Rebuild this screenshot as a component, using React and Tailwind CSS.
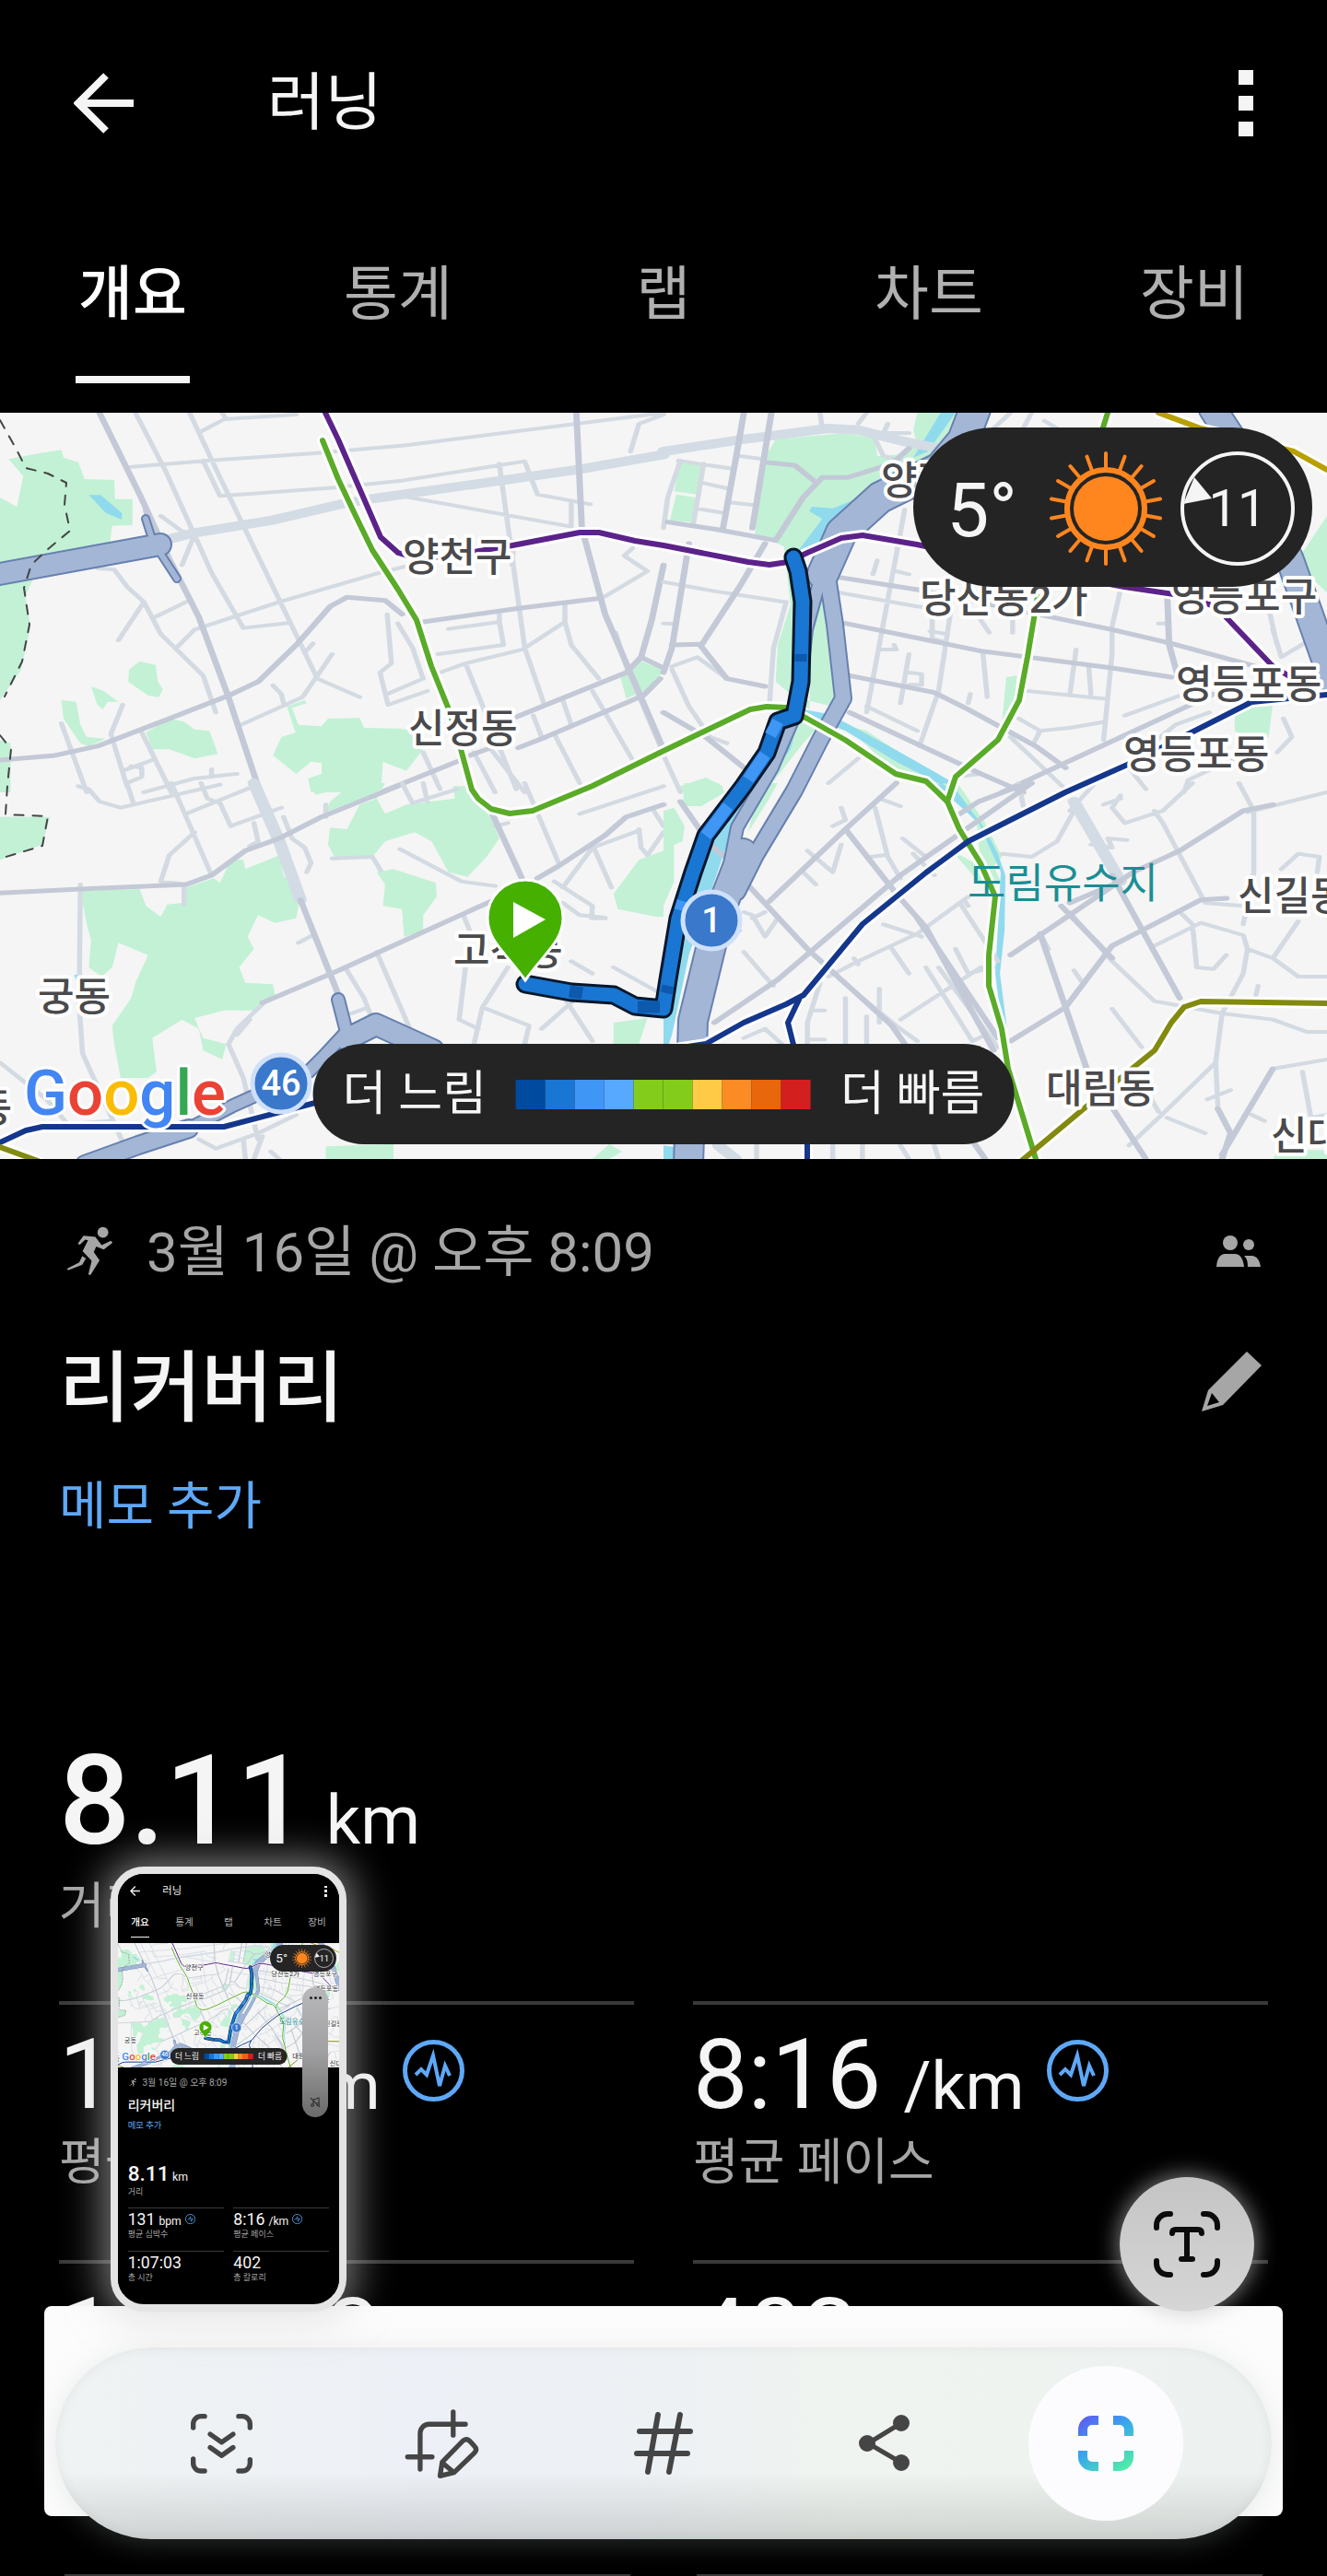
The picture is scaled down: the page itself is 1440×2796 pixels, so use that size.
import clsx from 'clsx'

const tabs = ['개요', '통계', '랩', '차트', '장비']

const paceColors = [
  'bg-[#004a9f]', 'bg-[#1976d2]', 'bg-[#3f96f5]', 'bg-[#57a8ff]', 'bg-[#84cc1c]',
  'bg-[#84cc1c]', 'bg-[#ffcb47]', 'bg-[#fb8b24]', 'bg-[#e8660c]', 'bg-[#d3201f]',
]

const stats = [
  { value: '131', unit: 'bpm', label: '평균 심박수', chart: true },
  { value: '8:16', unit: '/km', label: '평균 페이스', chart: true },
  { value: '1:07:03', label: '총 시간' },
  { value: '402', label: '총 칼로리' },
]

// Each tile covers a quarter of the map and has its own drawing grid
const tiles = [
  {
    place: 'matrix(.4592 0 0 .3333 0 -8)',
    parks: [
      'M20 175L95 155L145 145L150 170L185 185L200 240L270 243L272 305L313 305V390L265 392L260 445L100 500L60 620L72 720L50 860L0 960V300L40 330L55 230Z',
      'M305 860L330 833L368 845L373 900L385 925L375 950L350 945L303 900Z',
      'M215 915L245 930L280 965L255 965L243 990L230 975Z',
      'M145 960L180 965L190 1040L205 1080L250 1085L210 1110L190 1100L150 1020Z',
      'M345 1065L400 1020L435 1030L460 1055L495 1060L515 1135L460 1150L400 1120H360Z',
      'M678 980L720 960L725 970L690 985L705 1040L760 1045L775 1020L850 1018L860 1050L940 1052L990 1060L1000 1120L960 1190L905 1160L900 1260H735L728 1215L760 1200V1165L735 1160L700 1200L645 1140L665 1080L698 1065Z',
      'M1465 880L1510 830L1568 860L1545 915L1480 955Z',
      'M0 1090L25 1100V1260H0Z',
    ],
    water: ['M210 292H238L288 350V372L250 350Z'],
    bands: ['M385 440L460 415L640 375L810 320L900 300L1370 208L1568 160'],
    major: [
      'M235 24L330 290L400 500L470 690L540 950L600 1200L615 1260', 'M0 1155L130 1140L230 1110L400 1020L540 945L610 900L700 780L780 655L820 625L910 635L950 680',
      'M1362 24L1375 400L1430 680L1568 1120', 'M1000 705L1230 660L1420 628', 'M1568 520L1540 700L1515 820L1480 870L1300 970L1210 1020',
      'M1110 1140L1160 1115M1225 1115L1290 1080L1520 945L1560 890', 'M1515 820L1568 855', 'M345 340L360 430L420 570', 'M900 1260L1080 1160',
    ],
    minor: [
      'M320 24L390 210L500 545L575 725L685 708', 'M448 24L520 235L680 690L750 890L850 950', 'M310 200L490 180L750 155L960 130L1568 24',
      'M475 85L530 45L700 30M525 24L535 45', 'M480 180L520 295L790 268L950 245L1240 182L1270 290L1395 322', 'M1180 190L1240 790L1285 970', 'M960 298L1350 395V320',
      'M420 785L460 730L560 685L660 640L890 548L970 520', 'M230 530L270 535L300 590L340 640L380 745L480 880L510 1000', 'M340 640L280 765M365 690L440 640', 'M745 890L715 950L570 1040M745 890L785 810M670 970L665 940L645 912M720 805L740 775',
      'M915 680L925 840L898 870L917 975L1010 930M940 710L975 790L1000 890L915 940', 'M1040 870L1100 840L1235 795L1335 705V650M1060 728L1180 705L1190 780L1035 810M1180 680V705', 'M1335 705L1350 780L1415 890M1420 630L1530 540L1475 490L1495 465',
      'M1100 840L1220 1250M1210 520L1215 440M1310 1070L1370 1230M1400 930L1495 1155M1455 740L1480 850L1560 1110', 'M1260 1010L1280 1080M1330 960L1350 1040', 'M290 975L262 1070L300 1240M335 1065L405 1260M145 1035L205 1260', 'M290 1190L360 1155M300 1230L335 1210V1180L310 1175M340 1260L460 1215L560 1200M500 1185V1210', 'M1000 1130L1040 1250M1120 1130L1170 1260M1160 1120L1240 1260M1568 30L1510 60L1490 150', 'M380 360L430 410L460 420L430 520M390 470L400 430',
    ],
  },
  {
    place: 'matrix(.4592 0 0 .3333 720 -8)',
    parks: [
      'M265 110L430 90L500 108L505 165L560 160L600 130L590 80L600 24H690L640 200L500 270L420 340L350 430L335 480L340 960L410 985L400 600L380 570L350 620L345 990L265 900L270 780L300 650L285 460L245 435L215 430L235 180Z',
      'M40 185L90 190L80 290L25 280Z', 'M30 290L75 300L68 380L15 375Z', 'M340 1010L390 1010L330 1100L240 1260L270 1100Z',
      'M430 1040L480 1060L690 1250L620 1240L520 1160Z', 'M810 885L835 880L830 960L800 1030Z', 'M1350 1000L1380 975L1440 970L1430 1080L1395 1100L1350 1060Z',
      'M1568 360L1500 500L1530 560L1568 610Z', 'M40 1240L100 1212L140 1240V1260H40Z',
    ],
    water: [
      'M655 24H690L625 150L590 170Z', 'M350 330L400 335L520 270L420 370L350 480L320 470L375 370L345 345Z',
      'M330 990L390 1005L440 1040L560 1130L680 1225L670 1245L550 1160L430 1060L330 1005Z', 'M270 1100L320 1020L300 1120L225 1260H190Z',
    ],
    bands: ['M0 150L180 112L390 75L460 80L560 115L650 140'],
    major: [
      'M190 24L170 180L140 405M255 24L210 400', 'M10 380L130 405L265 440L330 300L375 235L435 235L540 190L580 140', 'M60 450L20 790L0 870M20 780L85 778L150 890L240 915', 'M240 450L180 590L90 780', 'M240 185L310 195L360 250',
      'M415 560L600 600L1060 730L1200 775L1400 850', 'M430 710L750 800L1060 855L1200 885', 'M440 880L640 935L720 990L880 1110L950 1180', 'M800 1260L1300 940', 'M440 1000L750 1200L850 1260', 'M1190 600L1195 780L1215 880', 'M0 1000L100 1080L190 1180',
    ],
    minor: [
      'M35 180L155 205M180 165L235 175M95 190L70 390M85 250L150 270M75 335L140 350M150 315L215 325M40 180L10 300L0 400', 'M370 24L375 75M460 60L480 24M530 60L520 90L580 90M500 110L520 165L560 180', 'M0 575L120 605L285 640M250 980L260 790L290 640', 'M20 850L80 820L150 890M20 860L60 980L110 1080M0 710L30 712',
      'M570 340L540 560L480 1000M415 610L600 655L680 670M680 660L650 930L605 1110M505 505L495 550M550 540L580 550', 'M635 690V760L665 770M630 735L670 745M545 780L550 795L515 795M580 810L560 970M755 810L765 950', 'M580 870L610 875V910H580M725 940L720 970M860 930L1040 955M975 795L960 945M1005 850L1010 940',
      'M840 1020L890 1060L960 1050L1045 1030M820 1080L950 1250M750 1200L690 1210M890 1060L875 1100', 'M1060 730V810L1040 1090M1080 600L1060 720M1170 710H1190M825 700V740M750 700L770 740', 'M1090 1010L1300 905M1130 1130L1210 1040L1290 1000M1465 1020L1485 1080L1450 1130M1100 1180L1140 1250M1230 1260L1240 1220L1380 1130', 'M1440 730L1460 820L1520 770M1430 660L1450 780M390 1230L460 1150M480 980L600 1060M820 24L780 75M870 24L850 75M900 50L930 75', 'M0 1140L40 1260M110 1080L150 1100',
    ],
  },
  {
    place: 'matrix(.4592 0 0 .3333 0 402)',
    parks: [
      'M0 110H118L100 200L0 250Z', 'M730 0H770L850 0H910L890 50L835 60L770 95L780 60L820 15L745 38Z',
      'M780 145L820 150L850 70L890 50L910 100L960 70L1075 50L1070 10H1110L1125 60L1160 110L1180 180L1150 240L1105 305L1060 290L1020 190L980 160L910 190L880 240L790 240L775 200Z',
      'M890 290L930 280L1030 325L1032 370L1000 430V480L955 500L950 410L905 400L910 330Z',
      'M190 350L330 345L345 400L380 435L395 395L430 390L440 340L505 310L520 325L545 250L575 250L580 280L660 235L670 300L710 370L700 440L650 455L610 430L585 500L600 540L565 600L580 650L645 655L650 690L600 740L530 740L460 765L480 830L535 850L525 900L480 870L470 800L430 770L360 830L370 940L350 960L285 960L270 850L265 790L290 740L310 700L320 650L350 560L280 520L265 600L240 630L210 600L215 510L205 460Z',
      'M1568 220L1510 250L1450 360L1460 410L1550 435H1568Z', 'M1450 780L1530 765L1510 850H1450Z', 'M770 1183L930 1175V1224H770Z', 'M1400 1224L1440 1175L1470 1200L1440 1224Z',
    ],
    water: ['M175 625L195 620L185 655Z'],
    bands: ['M600 0L660 190L710 380'],
    major: [
      'M0 358L190 345L440 330L500 300L580 220L660 180L760 110L940 10', 'M710 380L800 690', 'M1160 90L1240 330', 'M1270 310L1320 270L1430 170L1480 110L1568 70', 'M620 715L800 610L1160 385',
    ],
    minor: [
      'M190 330L187 720L195 880L300 1200M435 340V395', 'M185 10L210 20L235 60L285 80L520 5M300 0L315 65M405 0L500 300M475 0L490 50L520 65L545 140L665 80M440 100L600 10', 'M460 160L400 235L380 320L440 330M600 130L610 190L590 205', 'M670 110L690 180L720 210L735 260L725 290',
      'M785 245L880 240L900 285M945 215L1090 320L1170 335M890 550L975 820M820 610L860 700L880 770M1095 430L1110 480', 'M620 720L560 800L540 850L575 960L610 1160M560 820L590 770', 'M1200 600L1140 730L1120 850M1100 600L1085 770L1130 800M1150 735L1250 790L1240 850', 'M1240 0L1320 260M1330 340L1400 210L1510 155M1400 200L1445 340M1310 320L1400 400L1398 440L1430 440M1330 390L1370 430L1430 438', 'M1510 150L1515 210L1530 235L1568 160M1545 90L1568 140M950 0L975 65L1080 20M1000 0L1010 60M770 70V110', 'M1450 600L1568 690M1350 580L1400 620M1320 670L1400 840M1370 690L1280 800M705 520L740 495M0 910L110 1030L160 1110L260 1100', 'M470 1160L510 1190L610 1140L700 1080M575 1160L580 1224M620 1150L600 1224M660 1224L640 1200M1370 100L1568 10M1170 140L1200 130M830 750L860 735',
    ],
  },
  {
    place: 'matrix(.4592 0 0 .3333 720 402)',
    parks: [
      'M0 90L25 80L50 140L45 190L25 200V320L0 400Z', 'M50 0H130L145 30L90 75H45Z', 'M270 0L250 50L200 160L230 0Z', 'M660 0L700 10L760 130L800 240L780 270L800 330L750 330L700 250L680 220L750 270L740 130Z', 'M1450 1200L1520 1195H1568V1224H1440Z',
    ],
    water: [
      'M215 0L150 200L60 560L20 820L0 900V720L45 540L90 300L120 190L180 60Z', 'M640 0L690 20L760 150L790 230L808 300L806 480L795 620L812 800L800 790L784 620L792 430L797 290L745 130Z', 'M0 1180L25 1185L40 1224H0Z',
    ],
    bands: ['M970 60L1080 320M130 1180L170 1224'],
    major: [
      'M550 0L430 150L250 385', 'M120 780L270 640L560 300L870 0', 'M1440 70L1370 90L1220 220L1110 290L820 560', 'M1330 375L1270 380L1060 530L950 730L820 840', 'M1060 300L1220 700M430 150L550 360L620 470L780 870M600 440L790 830',
      'M185 310L340 540L540 790L760 1224M890 490L1000 930L1100 1140L1140 1224', 'M40 60L110 200L145 240M940 400L1060 570M960 390L1080 320', 'M1310 1060L1340 1140L1320 1224M1320 1210L1440 930', 'M700 100L745 60L860 0',
    ],
    minor: [
      'M500 80L530 240L560 310M420 80L430 120L400 140M340 220L400 290L420 200M490 240L520 235M565 180L620 240M510 50L560 75M590 230L640 300M330 290L360 330', 'M390 630L460 580L600 490L700 390L720 370M460 590L450 570M700 390L790 580M520 460L610 500M720 400L710 380', 'M620 600L730 840L760 820M650 600L790 860M690 540L720 620L780 600M560 770L750 600M540 540L580 620M510 670V780M470 700L550 790L600 840', 'M190 420L210 430L240 500L270 440M190 550L240 630L260 660M210 440L240 420M180 480L160 500', 'M370 650L340 780V850M430 700V850M480 760V850M350 740L380 740M340 835H380M190 830L240 800L280 850', 'M970 90L930 190L870 240L800 230M1020 0L960 90M1080 40L1060 80L1090 130L1180 90L1250 0M840 0L850 75M1040 70L1080 50M1160 90L1180 130L1280 390L1370 400M1360 0L1395 90V290L1370 460', 'M1010 200L1060 210L1050 180L1095 185M960 420L1060 580L1160 710L1320 750L1440 770L1520 810H1568', 'M1160 530L1270 455L1370 495L1380 540L1440 570L1500 630H1568M1440 570L1500 450M1220 420L1250 460L1260 600L1300 605L1330 560', 'M1380 540L1370 620L1320 750L1305 910L1310 1050M1305 910L1170 1090L1100 1180M1190 1090L1280 1140M1440 930L1568 900M1510 940L1530 1090L1568 1080', 'M1460 280L1500 230L1550 240L1545 290M890 490L910 540M970 610L990 650M1060 735L1130 860M1170 1070L1140 1000M1285 1030L1340 1000M1390 1080L1420 1100M1400 690L1405 660', 'M1380 95L1480 60L1568 30M650 1224L640 1180M400 1180V1224M470 1180V1224M220 1180V1224M560 1180L580 1224',
    ],
  },
]

const railLines = [
  { color: '#5b238a', d: 'M353 0L367 29L390 82L413 135L432 152L455 159L496 154L556 144L629 130H650L689 139L720 144L812 162L835 165L855 162L876 152L913 136L936 133L995 143L1110 168L1220 189L1294 200L1321 212L1381 275L1409 292' },
  { color: '#5aab28', d: 'M350 30L367 72L386 112L404 149L432 192L452 225L468 275L487 322L500 365L512 409L519 419L533 430L553 435L578 432L643 405L720 367L814 322L832 319L853 320L876 332L917 355L972 392L1005 400L1028 422L1041 452L1064 489L1080 525L1073 589V622L1087 669L1094 712L1124 810' },
  { color: '#5aab28', d: 'M1202 0L1197 16M1126 199L1115 265L1106 312L1083 355L1037 395L1028 422' },
  { color: '#14378c', d: 'M1440 306L1358 314L1289 349L1230 379L1156 412L1051 465L1005 499L936 555L872 632L853 642L807 662L766 685L342 749L243 775H46L28 779L0 792' },
  { color: '#14378c', d: 'M867 637L855 662L862 690L876 795V812' },
  { color: '#828a10', d: 'M1440 641L1303 639L1285 645L1271 662L1253 692L1216 722L1106 814M0 797L41 812' },
  { color: '#b8a000', d: 'M1257 0L1303 17L1404 42L1440 62' },
]

const expressways = [
  { w: 24, d: 'M-6 176L174 143' },
  { w: 8, d: 'M158 115L166 140L192 180' },
  { w: 34, d: 'M1058 -4L1045 30L1020 60L955 92L913 130L893 175' },
  { w: 14, d: 'M893 170L875 235L866 320L838 385L800 450L790 500' },
  { w: 18, d: 'M896 165L906 230L915 310L890 355L862 410L820 480L800 520' },
  { w: 32, d: 'M806 478L780 545L752 660L747 816' },
  { w: 14, d: 'M367 637L376 672L350 700L335 715L253 752L205 777' },
  { w: 20, d: 'M205 777L150 795L92 816' },
  { w: 24, d: 'M376 680L408 664L470 692' },
  { w: 30, d: 'M1316 -4L1345 40L1400 160L1446 290' },
]

const places = [
  [437, 172, '양천구'], [443, 358, '신정동'], [956, 89, '양평동'], [998, 217, '당산동2가'],
  [1271, 215, '영등포구'], [1276, 310, '영등포동'], [1219, 386, '영등포동'], [1343, 540, '신길동'],
  [1135, 749, '대림동'], [1379, 800, '신대방동'], [492, 599, '고척동'], [41, 649, '궁동'], [-66, 770, '항동'],
]

const route = 'M570 620L620 629L666 632L689 644L720 647L725 615L736 549L752 499L766 459L807 405L832 369L844 335L862 329L869 292L871 205L866 172L861 157'

function Shield({ x, y, children }) {
  return (
    <g>
      <circle cx={x} cy={y} r="31" fill="#3a78cb" stroke="#cfe0fb" strokeWidth="5" />
      <text x={x} y={y + 13} fontSize="38" fontWeight="500" fill="#fff" textAnchor="middle">{children}</text>
    </g>
  )
}

function RouteMap() {
  return (
    <svg viewBox="0 0 1440 810" className="block w-full h-auto bg-[#f5f5f5] font-['Roboto','Noto_Sans_CJK_KR',sans-serif]" role="img" aria-label="코스 지도">
      {tiles.map(tile => (
        <g key={tile.place} transform={tile.place} fill="none" strokeLinejoin="round" strokeLinecap="round">
          <path d={tile.parks.join('')} fill="#c3f1d5" />
          <path d={tile.water.join('')} fill="#90daee" />
          <path d={tile.minor.join('')} stroke="#d3dae2" strokeWidth="12" />
          <path d={tile.bands.join('')} stroke="#d3dce4" strokeWidth="30" />
          <path d={tile.major.join('')} stroke="#c3c9d6" strokeWidth="15" />
        </g>
      ))}

      <g fill="none" strokeLinejoin="round" strokeLinecap="round">
        {expressways.map(e => <path key={e.d} d={e.d} stroke="#6680b0" strokeWidth={e.w + 2} />)}
        {expressways.map(e => <path key={e.d} d={e.d} stroke="#a3b6d5" strokeWidth={e.w - 2} />)}
        <path d="M0 8L18 40L28 60L52 66L72 76L70 100L76 128L52 148L34 165L26 190L32 230L24 270L5 308M0 350L12 365L8 405L6 436L52 438L46 470L0 484" stroke="#444" strokeWidth="2" strokeDasharray="10 10" />
        {railLines.map(l => <path key={l.d} d={l.d} stroke="#fff" strokeWidth="12" />)}
        {railLines.map(l => <path key={l.d} d={l.d} stroke={l.color} strokeWidth="6" />)}
        <path d={route} stroke="#06172b" strokeWidth="21" />
        <path d={route} stroke="#1976d2" strokeWidth="15" />
        <path d="M766 459L790 427M812 398L830 371M836 350L844 335M738 540L741 530" stroke="#3f96f5" strokeWidth="13" strokeLinecap="butt" />
        <path d="M692 645H716M618 628L632 630M869 262V270M723 630L725 622" stroke="#0d59ad" strokeWidth="13" strokeLinecap="butt" />
      </g>

      <g fontSize="43" fontWeight="500" fill="#4a4a4c" stroke="#fff" strokeWidth="8" strokeLinejoin="round" paintOrder="stroke">
        {places.map(([x, y, name]) => <text key={`${name}${y}`} x={x} y={y}>{name}</text>)}
      </g>
      <text x="1050" y="527" fontSize="45" fill="#1a8e95">도림유수지</text>

      <Shield x={772} y={551}>1</Shield>
      <Shield x={305} y={728}>46</Shield>

      <path d="M570 507a41 41 0 0 0-41 41c0 25 18 36 41 68c23-32 41-43 41-68a41 41 0 0 0-41-41z" fill="#45b000" stroke="#fff" strokeWidth="3" />
      <path d="M557 531L592 550L557 570Z" fill="#fff" />

      <text x="26" y="762" fontSize="69" fontWeight="500" stroke="#fff" strokeWidth="6" strokeLinejoin="round" paintOrder="stroke">
        <tspan fill="#4285f4">G</tspan>
        <tspan fill="#ea4335">o</tspan>
        <tspan fill="#fbbc05">o</tspan>
        <tspan fill="#4285f4">g</tspan>
        <tspan fill="#34a853">l</tspan>
        <tspan fill="#ea4335">e</tspan>
      </text>
    </svg>
  )
}

const rays = Array.from({ length: 18 }, (_, i) => i * 20)

function Weather() {
  return (
    <div className="absolute top-4 right-4 flex h-[173px] items-center gap-8 rounded-full bg-[#242424] pt-0.5 pr-[18px] pl-9 text-[#f5f5f5]">
      <span className="pt-1 text-[82px] leading-none">5°</span>
      <svg viewBox="-64 -64 128 128" className="size-32" aria-hidden="true">
        <circle r="35" fill="#ff861f" />
        <circle r="42" fill="none" stroke="#ff861f" strokeWidth="6" />
        {rays.map(a => (
          <path key={a} d="M0-45V-60" transform={`rotate(${a})`} stroke="#ff861f" strokeWidth="4" strokeLinecap="round" />
        ))}
      </svg>
      <div className="relative -ml-4 flex size-[126px] items-center justify-center">
        <svg viewBox="-63 -63 126 126" className="absolute inset-0" aria-hidden="true">
          <circle r="60" fill="none" stroke="#f5f5f5" strokeWidth="4" />
          <path d="M-47-34L-28-11L-59-5Z" fill="#f5f5f5" />
        </svg>
        <span className="text-[56px] leading-none">11</span>
      </div>
    </div>
  )
}

function PaceLegend() {
  return (
    <div className="absolute bottom-4 left-1/2 flex h-[109px] -translate-x-1/2 items-center gap-8 rounded-full bg-[#242424] px-8 whitespace-nowrap">
      <span className="text-[52px] leading-none text-[#f5f5f5]">더 느림</span>
      <div className="flex">
        {paceColors.map((color, i) => <span key={i} className={clsx('h-8 w-8', color)} />)}
      </div>
      <span className="text-[52px] leading-none text-[#f5f5f5]">더 빠름</span>
    </div>
  )
}

function ChartBadge() {
  return (
    <svg viewBox="0 0 67 67" className="size-[67px] shrink-0" fill="none" stroke="#5ea8f7" aria-hidden="true">
      <circle cx="33.5" cy="33.5" r="31" strokeWidth="5" />
      <path d="M14 38L20 32L26 38L33 17L40 50L46 28L51 39" strokeWidth="4" strokeLinejoin="miter" />
    </svg>
  )
}

function Stat({ value, unit, label, chart }) {
  return (
    <div className="h-[281px] border-t-4 border-[#3a3a3a]">
      <dd className="flex h-[152px] gap-6 pt-[38px] leading-[76px] whitespace-nowrap text-[#f5f5f5]">
        <span className="text-[106px]">{value}</span>
        {unit && <span className="pt-3 text-[73px]">{unit}</span>}
        {chart && <ChartBadge />}
      </dd>
      <dt className="text-[54px] leading-10 text-[#a6a6a6]">{label}</dt>
    </div>
  )
}

function ActivityScreen() {
  return (
    <div className="bg-black font-['Roboto','Noto_Sans_CJK_KR',sans-serif] text-[#f5f5f5]">
      <header className="flex h-56 items-center px-20">
        <button type="button" aria-label="뒤로">
          <svg viewBox="0 0 66 66" className="size-[66px]" fill="none" stroke="#f5f5f5" strokeWidth="8">
            <path d="M65 33H7M35 3L5 33L35 63" />
          </svg>
        </button>
        <h1 className="ml-36 flex-1 text-[68px] leading-none">러닝</h1>
        <button type="button" aria-label="더보기" className="flex flex-col gap-3">
          <span className="size-4 bg-[#f5f5f5]" />
          <span className="size-4 bg-[#f5f5f5]" />
          <span className="size-4 bg-[#f5f5f5]" />
        </button>
      </header>

      <nav className="grid h-56 grid-cols-5">
        {tabs.map((tab, i) => (
          <button
            key={tab}
            type="button"
            className={clsx('relative flex items-start justify-center pt-16 text-[64px] leading-[64px]', i === 0 ? 'font-medium text-white' : 'text-[#b0b0b0]')}
          >
            {tab}
            {i === 0 && <span className="absolute bottom-8 h-2 w-[124px] bg-[#f5f5f5]" />}
          </button>
        ))}
      </nav>

      <div className="relative overflow-hidden">
        <RouteMap />
        <Weather />
        <PaceLegend />
      </div>

      <main className="px-16">
        <div className="flex h-[200px] items-center text-[#a6a6a6]">
          <svg viewBox="36 34 152 164" className="ml-2 h-[54px] w-[51px]" fill="#a6a6a6" aria-hidden="true">
            <circle cx="155" cy="54" r="18" />
            <path d="M72 92L91 65L130 69L151 96L181 82L187 88L158 111L133 101L125 119L144 146L114 195L107 193L118 148L88 116L106 80L97 78L79 95ZM87 132L99 140L87 161L40 179L37 174L77 153Z" />
          </svg>
          <p className="ml-9 flex-1 pt-1 text-[60px] leading-none">3월 16일 @ 오후 8:09</p>
          <svg viewBox="0 0 48 34" className="mr-2 h-[34px] w-12" fill="#a6a6a6" role="img" aria-label="공유 대상">
            <circle cx="15" cy="8" r="8" />
            <circle cx="35" cy="10" r="6" />
            <path d="M0 34C1 22 6 20 10 20H20C25 20 29 24 30 34ZM30 22H38C44 22 47 27 48 34H34C34 28 33 25 30 22Z" />
          </svg>
        </div>
        <div className="flex h-[100px] items-start justify-between">
          <h2 className="text-[84px] leading-[100px] font-medium">리커버리</h2>
          <button type="button" aria-label="이름 수정" className="mt-2 mr-1.5">
            <svg viewBox="0 0 67 67" className="size-[67px]">
              <path d="M50 1L66 16L24 59L1 66L8 43ZM12 46L7 60L20 56Z" fill="#a6a6a6" fillRule="evenodd" />
            </svg>
          </button>
        </div>
        <div className="flex h-[150px] items-center pt-1">
          <a href="#memo" className="text-[56px] leading-none text-[#5ea8f7]">메모 추가</a>
        </div>

        <dl className="pt-[182px]">
          <dd className="flex h-[130px] items-baseline gap-5 leading-[130px]">
            <span className="text-[136px] font-medium">8.11</span>
            <span className="text-[74px]">km</span>
          </dd>
          <dt className="h-[152px] text-[54px] leading-[100px] text-[#a6a6a6]">거리</dt>
        </dl>

        <dl className="grid grid-cols-2 gap-x-16">
          {stats.map(stat => <Stat key={stat.label} {...stat} />)}
        </dl>
      </main>
    </div>
  )
}

function ScreenPreview() {
  return (
    <div className="relative h-[483px] w-64 overflow-hidden rounded-[36px] border-8 border-[#e4e4e4] bg-black shadow-[0_0_44px_8px_rgba(210,210,210,0.6)]">
      <div className="[zoom:0.16667]" aria-hidden="true" inert>
        <ActivityScreen />
      </div>
      <div className="absolute top-[123px] right-3 flex h-[141px] w-7 flex-col items-center justify-between rounded-full bg-linear-to-b from-[#b8b8bb] via-[#a0a0a2] to-[#6a6a6a] py-2.5">
        <span className="flex gap-[2px]">
          <i className="size-[3px] rounded-full bg-[#222]" />
          <i className="size-[3px] rounded-full bg-[#222]" />
          <i className="size-[3px] rounded-full bg-[#222]" />
        </span>
        <svg viewBox="0 0 12 12" className="size-3" fill="none" stroke="#333" strokeWidth="1.2">
          <path d="M1 1L11 11M4 4V9M4 3L10 1V7" />
          <circle cx="3" cy="9" r="1.5" />
          <circle cx="9" cy="8" r="1.5" />
        </svg>
      </div>
    </div>
  )
}

function CaptureToolbar() {
  return (
    <nav className="grid h-52 grid-cols-5 items-center justify-items-center rounded-full bg-[linear-gradient(to_bottom,transparent_65%,rgba(110,115,110,0.25)_100%),linear-gradient(to_right,#f0f3f3_0%,#edf0f6_30%,#edf1f4_50%,#eff4f0_65%,#edf2f1_100%)] px-[60px] shadow-[0_4px_30px_rgba(170,180,180,0.25),inset_0_0_14px_rgba(0,0,0,0.06)]">
      <button type="button" aria-label="스크롤 캡처">
        <svg viewBox="50 56 200 200" className="size-[67px]" fill="none" stroke="#454545" strokeWidth="16" strokeLinecap="round" strokeLinejoin="round">
          <path d="M58 104V92a25 25 0 0 1 25-25H95M205 67H217a25 25 0 0 1 25 25V104M242 207V219a25 25 0 0 1-25 25H205M95 244H83a25 25 0 0 1-25-25V205" />
          <path d="M113 125L150 151L187 125M113 168L150 194L187 168" />
        </svg>
      </button>
      <button type="button" aria-label="편집">
        <svg viewBox="750 42 250 232" className="h-[77px] w-[83px]" fill="none" stroke="#454545" strokeWidth="16" strokeLinecap="round" strokeLinejoin="round">
          <path d="M949 94H830a29 29 0 0 0-29 29V241M760 201H840M909 54V130" />
          <path d="M866 263L873 218L940 149Q951 139 962 148L978 165Q989 176 979 187L912 252ZM875 221L908 249" />
        </svg>
      </button>
      <button type="button" aria-label="태그">
        <svg viewBox="0 0 64 68" className="h-[68px] w-16" fill="none" stroke="#454545" strokeWidth="6" strokeLinecap="round">
          <path d="M6 21H61M3 45H58M26 3L15 65M50 3L38 65" />
        </svg>
      </button>
      <button type="button" aria-label="공유">
        <svg viewBox="0 0 56 62" className="h-[62px] w-14" fill="#454545" stroke="#454545" strokeWidth="5">
          <path d="M46 9L10 31L46 52" fill="none" />
          <circle cx="46" cy="9" r="6.5" />
          <circle cx="9" cy="31" r="6.5" />
          <circle cx="46" cy="52" r="6.5" />
        </svg>
      </button>
      <button type="button" aria-label="스마트 선택" className="flex size-[168px] items-center justify-center rounded-full bg-[#fcfcfe]">
        <svg viewBox="0 0 60 60" className="size-[60px]" fill="none" stroke="url(#select)" strokeWidth="10">
          <defs>
            <linearGradient id="select" gradientUnits="userSpaceOnUse" x1="5" y1="0" x2="50" y2="60">
              <stop offset="0" stopColor="#5f5af0" />
              <stop offset="0.45" stopColor="#38a6ee" />
              <stop offset="1" stopColor="#4fefa6" />
            </linearGradient>
          </defs>
          <path d="M5 22V15A10 10 0 0 1 15 5H22M38 5H45A10 10 0 0 1 55 15V22M55 38V45A10 10 0 0 1 45 55H38M22 55H15A10 10 0 0 1 5 45V38" />
        </svg>
      </button>
    </nav>
  )
}

export default function App() {
  return (
    <div className="relative overflow-hidden bg-black">
      <ActivityScreen />
      <div className="grid grid-cols-2 gap-x-[72px] px-[70px] pt-[60px]">
        <div className="h-0.5 bg-[#3a3a3a]" />
        <div className="h-0.5 bg-[#3a3a3a]" />
      </div>

      <div className="absolute inset-x-12 bottom-[65px] h-[228px] rounded-lg bg-[#fcfcfc]" />
      <div className="absolute inset-x-[60px] bottom-10">
        <div className="mb-[39px] flex items-end justify-between pr-[19px] pl-[60px]">
          <ScreenPreview />
          <button type="button" aria-label="텍스트 추출" className="flex size-[146px] items-center justify-center rounded-full bg-linear-to-b from-[#c4c4c4] to-[#d6d6d6] shadow-[0_0_22px_3px_rgba(190,190,190,0.6)]">
            <svg viewBox="0 0 72 72" className="size-[72px]" fill="none" stroke="#0c0c0c" strokeWidth="6" strokeLinecap="round" strokeLinejoin="round">
              <path d="M3 18V15A12 12 0 0 1 15 3H18M54 3H57A12 12 0 0 1 69 15V18M69 54V57A12 12 0 0 1 57 69H54M18 69H15A12 12 0 0 1 3 57V54" />
              <path d="M20 24Q20 20 24 20H48Q52 20 52 24M36 20V52M30 52H42" />
            </svg>
          </button>
        </div>
        <CaptureToolbar />
      </div>
    </div>
  )
}
